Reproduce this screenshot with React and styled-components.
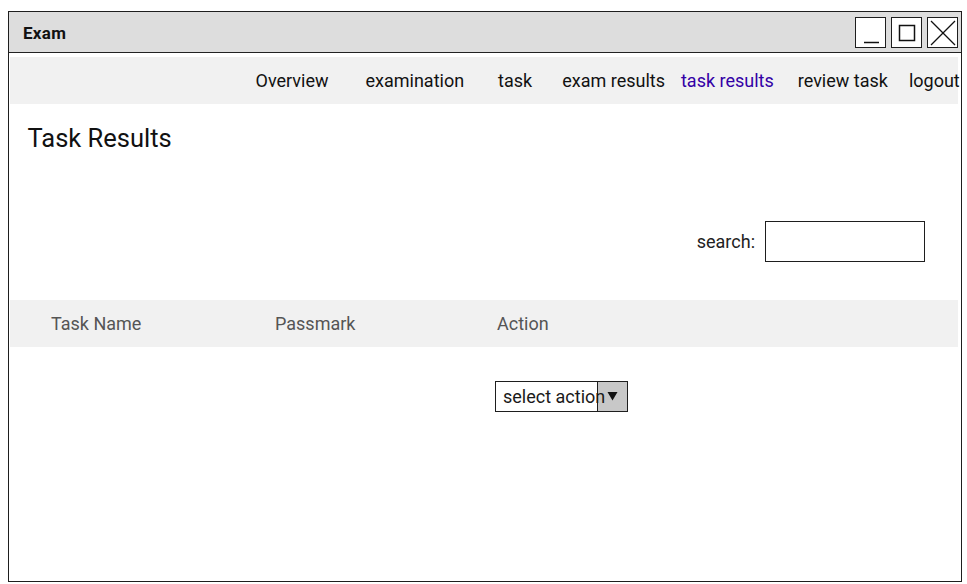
import React from "react";
import styled, { createGlobalStyle } from "styled-components";

const Global = createGlobalStyle`
  html, body { margin: 0; padding: 0; background: #fff; }
  body { font-family: Roboto, "Liberation Sans", sans-serif; color: #111; }
  * { box-sizing: border-box; }
`;

const Window = styled.div`
  margin: 11px 0 0 8px;
  width: 954px;
  height: 571px;
  border: 1.5px solid #1e1e1e;
  display: flex;
  flex-direction: column;
  background: #fff;
`;

const TitleBar = styled.div`
  height: 41px;
  flex: none;
  background: #dddddd;
  border-bottom: 1.5px solid #222;
  display: flex;
  align-items: center;
  padding: 0 3px 0 14px;
`;

const TitleText = styled.div`
  flex: 1;
  font-size: 17px;
  font-weight: 700;
  letter-spacing: 0.3px;
  color: #111;
  padding-top: 1px;
`;

const WinButtons = styled.div`
  display: flex;
  gap: 5px;
  margin-top: 1px;
`;

const WinButton = styled.div`
  width: 31px;
  height: 31px;
  border: 1.5px solid #1e1e1e;
  background: #fff;
  display: flex;
  align-items: center;
  justify-content: center;
  svg { display: block; }
`;

const Bar = styled.div`
  flex: none;
  height: 47px;
  margin: 0 3px 0 0.5px;
  background: #f1f1f1;
`;

const NavBar = styled(Bar)`
  margin-top: 3.5px;
  display: flex;
  align-items: center;
  padding-left: 246px;
`;

const NavItem = styled.a`
  font-size: 18px;
  color: ${(p) => (p.$active ? "#3300a6" : "#111")};
  margin-left: ${(p) => p.$ml}px;
  text-decoration: none;
  white-space: nowrap;
  padding-top: 1px;
`;

const Heading = styled.h1`
  margin: 19px 0 0 18.5px;
  font-size: 25.5px;
  font-weight: 400;
  line-height: 30px;
  color: #111;
`;

const SearchRow = styled.div`
  margin: 68px 36px 0 0;
  display: flex;
  justify-content: flex-end;
  align-items: center;
  gap: 10px;
`;

const SearchLabel = styled.label`
  font-size: 18px;
  color: #222;
`;

const SearchBox = styled.div`
  width: 160px;
  height: 41px;
  border: 1.5px solid #1e1e1e;
  background: #fff;
`;

const Cols = styled.div`
  display: grid;
  grid-template-columns: 224px 222px 1fr;
  padding-left: 41.5px;
`;

const HeaderBar = styled(Bar)`
  margin-top: 38px;
  align-items: center;
  display: grid;
  grid-template-columns: 224px 222px 1fr;
  padding-left: 41.5px;
`;

const HeadCell = styled.div`
  font-size: 18px;
  color: #555;
  padding-top: 1px;
`;

const BodyRow = styled(Cols)`
  margin-top: 34px;
`;

const Select = styled.div`
  grid-column: 3;
  margin-left: -2px;
  width: 133px;
  height: 31px;
  border: 1.5px solid #1e1e1e;
  display: flex;
  align-items: center;
  position: relative;
  background: #fff;
`;

const SelectText = styled.span`
  position: relative;
  z-index: 1;
  font-size: 18px;
  color: #1a1a1a;
  padding-left: 7.5px;
  white-space: nowrap;
  width: 101px;
  overflow: visible;
`;

const SelectArrow = styled.div`
  position: absolute;
  top: 0;
  right: 0;
  bottom: 0;
  width: 30px;
  background: #c8c8c8;
  border-left: 1.5px solid #1e1e1e;
  display: flex;
  align-items: center;
  justify-content: center;
  svg { display: block; }
`;

const navItems = [
  { label: "Overview", ml: 0 },
  { label: "examination", ml: 37 },
  { label: "task", ml: 34 },
  { label: "exam results", ml: 30 },
  { label: "task results", ml: 16, active: true },
  { label: "review task", ml: 24 },
  { label: "logout", ml: 21 },
];

export default function App() {
  return (
    <>
      <Global />
      <Window>
        <TitleBar>
          <TitleText>Exam</TitleText>
          <WinButtons>
            <WinButton>
              <svg width="28" height="28" viewBox="0 0 28 28">
                <line x1="7" y1="23.5" x2="22" y2="23.5" stroke="#111" strokeWidth="1.5" />
              </svg>
            </WinButton>
            <WinButton>
              <svg width="28" height="28" viewBox="0 0 28 28">
                <rect x="6.5" y="6.5" width="15" height="15" fill="none" stroke="#111" strokeWidth="1.5" />
              </svg>
            </WinButton>
            <WinButton>
              <svg width="28" height="28" viewBox="0 0 28 28">
                <line x1="2" y1="2" x2="26" y2="26" stroke="#111" strokeWidth="1.3" />
                <line x1="26" y1="2" x2="2" y2="26" stroke="#111" strokeWidth="1.3" />
              </svg>
            </WinButton>
          </WinButtons>
        </TitleBar>
        <NavBar>
          {navItems.map((n) => (
            <NavItem key={n.label} $ml={n.ml} $active={n.active}>
              {n.label}
            </NavItem>
          ))}
        </NavBar>
        <Heading>Task Results</Heading>
        <SearchRow>
          <SearchLabel>search:</SearchLabel>
          <SearchBox />
        </SearchRow>
        <HeaderBar>
          <HeadCell>Task Name</HeadCell>
          <HeadCell>Passmark</HeadCell>
          <HeadCell>Action</HeadCell>
        </HeaderBar>
        <BodyRow>
          <Select>
            <SelectText>select action</SelectText>
            <SelectArrow>
              <svg width="11" height="10" viewBox="0 0 11 10">
                <path d="M0.5 1 L10.5 1 L5.5 9.5 Z" fill="#111" />
              </svg>
            </SelectArrow>
          </Select>
        </BodyRow>
      </Window>
    </>
  );
}
